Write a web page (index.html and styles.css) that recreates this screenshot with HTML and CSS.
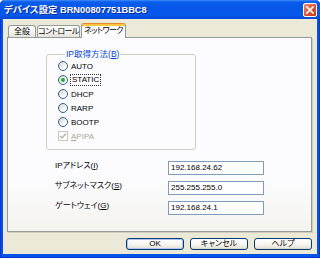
FILE: index.html
```html
<!DOCTYPE html>
<html lang="ja">
<head>
<meta charset="utf-8">
<link rel="stylesheet" href="styles.css">
</head>
<body>
<div class="window">
  <div class="titlebar">
    <span class="title">デバイス設定 BRN00807751BBC8</span>
    <span class="close"><svg width="12" height="12" viewBox="0 0 12 12"><path d="M3 3 L9 9 M9 3 L3 9" stroke="#fff" stroke-width="1.7" stroke-linecap="square"/></svg></span>
  </div>
  <div class="body">
    <div class="tabs">
      <div class="tab tab-general">全般</div>
      <div class="tab tab-control">コントロール</div>
      <div class="tab tab-network active">ネットワーク</div>
    </div>
    <div class="panel">
      <fieldset class="group">
        <legend>IP取得方法(<u>B</u>)</legend>
        <div class="opt"><span class="radio"></span><span>AUTO</span></div>
        <div class="opt"><span class="radio on"></span><span class="focus">STATIC</span></div>
        <div class="opt"><span class="radio"></span><span>DHCP</span></div>
        <div class="opt"><span class="radio"></span><span>RARP</span></div>
        <div class="opt"><span class="radio"></span><span>BOOTP</span></div>
        <div class="opt disabled"><span class="check"><svg width="8" height="8" viewBox="0 0 8 8"><path d="M1 4 L3 6 L7 1.5" fill="none" stroke="#B5B2A6" stroke-width="1.3"/></svg></span><span><u>A</u>PIPA</span></div>
      </fieldset>
      <div class="fields">
        <div class="row"><label>IPアドレス(<u>I</u>)</label><span class="input">192.168.24.62</span></div>
        <div class="row"><label>サブネットマスク(<u>S</u>)</label><span class="input">255.255.255.0</span></div>
        <div class="row"><label>ゲートウェイ(<u>G</u>)</label><span class="input">192.168.24.1</span></div>
      </div>
    </div>
    <div class="buttons">
      <span class="btn default">OK</span>
      <span class="btn">キャンセル</span>
      <span class="btn">ヘルプ</span>
    </div>
  </div>
</div>
</body>
</html>
```
FILE: styles.css
```css
* { box-sizing: border-box; margin: 0; padding: 0; }
html, body { width: 320px; height: 258px; overflow: hidden; background: #fff; }
body {
  font-family: "Liberation Sans", "Noto Sans CJK JP", sans-serif;
  font-size: 8px;
  color: #000;
  font-feature-settings: "palt";
}
.window {
  width: 320px;
  height: 258px;
  display: flex;
  flex-direction: column;
  background: #0055E5;
  box-shadow: inset 1px 0 #0831D9, inset -1px 0 #0831D9, inset 0 -1px #0831D9;
  border-radius: 5px 5px 0 0;
  overflow: hidden;
}
.titlebar {
  height: 19px;
  flex: none;
  display: flex;
  align-items: center;
  justify-content: space-between;
  padding: 0 3px 0 4px;
  background: linear-gradient(#3D8CF7 0, #0A5CEC 2px, #0556E8 9px, #0559EC 15px, #0348D4 19px);
  color: #fff;
}
.title {
  font-size: 9.3px;
  font-weight: bold;
  text-shadow: 1px 1px 0 #0A2A9B;
  line-height: 12px;
  margin-top: 1px;
}
.close {
  width: 14px;
  height: 14px;
  margin-top: 1px;
  border: 1px solid #fff;
  border-radius: 2px;
  background: linear-gradient(135deg, #EE8C70, #DA4E30 60%, #C5381E);
  display: flex;
  align-items: center;
  justify-content: center;
}
.body {
  flex: 1;
  margin: 0 3px 4px;
  background: #ECE9D8;
  padding: 4px 5px 0 4px;
  display: flex;
  flex-direction: column;
}
.tabs {
  display: flex;
  align-items: flex-end;
  height: 14px;
  padding-left: 1px;
  position: relative;
  z-index: 1;
}
.tab {
  flex: none;
  height: 12px;
  border: 1px solid #919B9C;
  border-bottom: none;
  border-radius: 3px 3px 0 0;
  background: linear-gradient(#FFFFFF, #F3F3EF 60%, #E4E2D8);
  text-align: center;
  line-height: 11px;
  margin-right: 1px;
  white-space: nowrap;
  letter-spacing: -0.6px;
}
.tab-general { width: 28px; letter-spacing: 0; }
.tab-control { width: 43px; }
.tab-network { width: 45px; }
.tab.active {
  height: 15px;
  margin-bottom: -1px;
  background: #FCFCFE;
  border-top-color: #E68B2C;
  box-shadow: inset 0 2px #FFC73C;
  line-height: 13px;
}
.panel {
  width: 305px;
  height: 195px;
  flex: none;
  border: 1px solid #919B9C;
  background: linear-gradient(#FCFCFE 75%, #F4F3EE);
  box-shadow: 1px 1px 0 #D0CEBF;
}
.group {
  margin: 11px 0 0 38px;
  width: 150px;
  height: 101px;
  border: 1px solid #D0D0BF;
  border-radius: 3px;
  padding: 0 4px 0 10px;
}
.group legend {
  color: #0046D5;
  line-height: 10px;
  padding: 0 1px;
  margin-left: 8px;
  font-size: 8.5px;
}
.opt {
  display: flex;
  align-items: center;
  gap: 3px;
  height: 14px;
  margin-left: 1px;
}
.radio {
  flex: none;
  position: relative;
  width: 10px;
  height: 10px;
  border: 1px solid #2C5F94;
  border-radius: 50%;
  background: linear-gradient(135deg, #D6D3C8, #FFFFFF 75%);
}
.radio.on::after {
  content: "";
  position: absolute;
  left: 2px;
  top: 2px;
  width: 4px;
  height: 4px;
  border-radius: 50%;
  background: #2EA82E;
}
.focus {
  outline: 1px dotted #333;
  padding: 0 1px;
  line-height: 10px;
}
.check {
  flex: none;
  width: 10px;
  height: 10px;
  border: 1px solid #CAC8BB;
  background: #fff;
  display: flex;
  align-items: center;
  justify-content: center;
}
.disabled { color: #ACA899; }
.fields {
  display: flex;
  flex-direction: column;
  gap: 6px;
  margin: 11px 0 0 47px;
}
.row {
  display: flex;
  align-items: flex-start;
}
.row label {
  width: 113px;
  line-height: 10px;
  white-space: nowrap;
}
.input {
  width: 96px;
  height: 14px;
  border: 1px solid #7F9DB9;
  background: #fff;
  padding-left: 2px;
  line-height: 12px;
}
.buttons {
  display: flex;
  justify-content: flex-end;
  gap: 6px;
  margin-top: 6px;
}
.btn {
  width: 58px;
  height: 12px;
  border: 1px solid #003C74;
  border-radius: 3px;
  background: linear-gradient(#FFFFFF, #F5F4EF 55%, #E8E5DC 85%, #D6D0C5);
  text-align: center;
  line-height: 10px;
}
.btn.default {
  box-shadow: inset 0 0 0 1px #AFC6F2;
}
```
